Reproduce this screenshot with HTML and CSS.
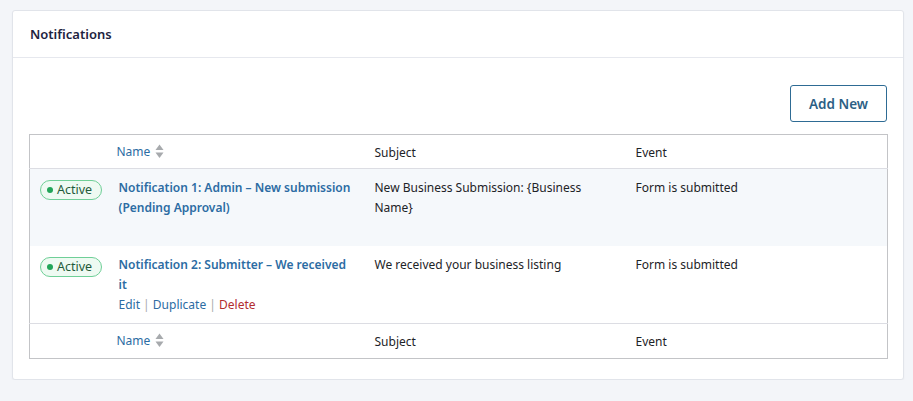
FILE: index.html
```html
<!DOCTYPE html>
<html>
<head>
<meta charset="utf-8">
<link rel="stylesheet" href="styles.css">
</head>
<body>
<div class="page">
  <section class="card">
    <header class="card-head">
      <h2 class="card-title">Notifications</h2>
    </header>
    <div class="card-body">
      <div class="toolbar">
        <button class="btn-outline">Add New</button>
      </div>
      <table class="list">
        <colgroup>
          <col class="c-status">
          <col class="c-name">
          <col class="c-subject">
          <col class="c-event">
        </colgroup>
        <thead>
          <tr>
            <th></th>
            <th class="sortable">Name <span class="sort"><svg width="9" height="15" viewBox="0 0 9 15"><path d="M4.5 0.5 L8.5 6 L0.5 6 Z" fill="#a7aaad"/><path d="M0.5 8.5 L8.5 8.5 L4.5 14 Z" fill="#a7aaad"/></svg></span></th>
            <th>Subject</th>
            <th>Event</th>
          </tr>
        </thead>
        <tbody>
          <tr class="alt">
            <td class="status"><span class="badge"><span class="dot"></span>Active</span></td>
            <td class="name">
              <a class="title-link">Notification 1: Admin – New submission (Pending Approval)</a>
              <div class="actions hidden"><a>Edit</a> <span class="sep">|</span> <a>Duplicate</a> <span class="sep">|</span> <a class="del">Delete</a></div>
            </td>
            <td>New Business Submission: {Business Name}</td>
            <td>Form is submitted</td>
          </tr>
          <tr>
            <td class="status"><span class="badge"><span class="dot"></span>Active</span></td>
            <td class="name">
              <a class="title-link">Notification 2: Submitter – We received it</a>
              <div class="actions"><a>Edit</a> <span class="sep">|</span> <a>Duplicate</a> <span class="sep">|</span> <a class="del">Delete</a></div>
            </td>
            <td>We received your business listing</td>
            <td>Form is submitted</td>
          </tr>
        </tbody>
        <tfoot>
          <tr>
            <th></th>
            <th class="sortable">Name <span class="sort"><svg width="9" height="15" viewBox="0 0 9 15"><path d="M4.5 0.5 L8.5 6 L0.5 6 Z" fill="#a7aaad"/><path d="M0.5 8.5 L8.5 8.5 L4.5 14 Z" fill="#a7aaad"/></svg></span></th>
            <th>Subject</th>
            <th>Event</th>
          </tr>
        </tfoot>
      </table>
    </div>
  </section>
</div>
</body>
</html>
```

FILE: styles.css
```css
* { box-sizing: border-box; }
html, body { margin: 0; padding: 0; }
body {
  background: #f3f5f9;
  font-family: "Noto Sans", "Open Sans", sans-serif;
  font-size: 12px;
  color: #1d2327;
}
.page { padding: 10px 10px 0 12px; }
.card {
  width: 892px;
  background: #fff;
  border: 1px solid #e1e4ea;
  border-radius: 3px;
  box-shadow: 0 1px 2px rgba(0,0,0,0.04);
}
.card-head {
  height: 47px;
  border-bottom: 1px solid #e6e8ee;
  display: flex;
  align-items: center;
  padding: 0 17px;
}
.card-title {
  margin: 0;
  font-size: 13px;
  font-weight: 600;
  color: #1d2340;
}
.card-body { padding: 27px 16px 20px 16px; }
.toolbar {
  display: flex;
  justify-content: flex-end;
  margin-bottom: 12px;
}
.btn-outline {
  width: 97px;
  height: 37px;
  background: #fff;
  border: 1px solid #2e6b94;
  border-radius: 3px;
  color: #2c5f85;
  font-family: inherit;
  font-size: 13.5px;
  font-weight: 600;
  padding: 0;
}
.list {
  width: 858px;
  table-layout: fixed;
  border-collapse: collapse;
  border: 1px solid #c3c4c7;
}
.c-status { width: 79px; }
.c-name { width: 258px; }
.c-subject { width: 261px; }
.c-event { width: 260px; }
.list th {
  text-align: left;
  font-weight: 400;
  height: 34px;
  padding: 2px 8px 0 8px;
  color: #1d2327;
  vertical-align: middle;
}
.list thead tr { border-bottom: 1px solid #dcdde3; }
.list tfoot tr { border-top: 1px solid #dcdde3; }
.list tfoot th { height: 35px; padding-top: 1px; }
.list th.sortable { color: #2c6ca3; }
.sort { display: inline-block; vertical-align: -3px; margin-left: 2px; }
.list td {
  vertical-align: top;
  padding: 9px 8px 8px 8px;
  line-height: 20px;
  color: #1d2327;
}
.list tbody tr { height: 77px; }
.list tr.alt { background: #f5f8fb; }
.list td.status { padding-left: 10px; padding-top: 10px; }
.list td.name { padding-left: 10px; padding-right: 13px; }
.badge {
  display: inline-flex;
  align-items: center;
  height: 20px;
  width: 62px;
  padding: 0 0 0 6px;
  border: 1px solid #6fcf97;
  border-radius: 10px;
  background: #eefaf2;
  color: #1f5b3a;
  font-size: 12.5px;
  line-height: 18px;
}
.dot {
  width: 6px;
  height: 6px;
  border-radius: 50%;
  background: #22a559;
  margin-right: 4px;
}
.title-link {
  display: block;
  color: #2c6ca3;
  font-weight: 600;
}
.actions { color: #2c6ca3; line-height: 20px; }
.actions.hidden { visibility: hidden; }
.sep { color: #a7aaad; }
.del { color: #b32d2e; }
```
